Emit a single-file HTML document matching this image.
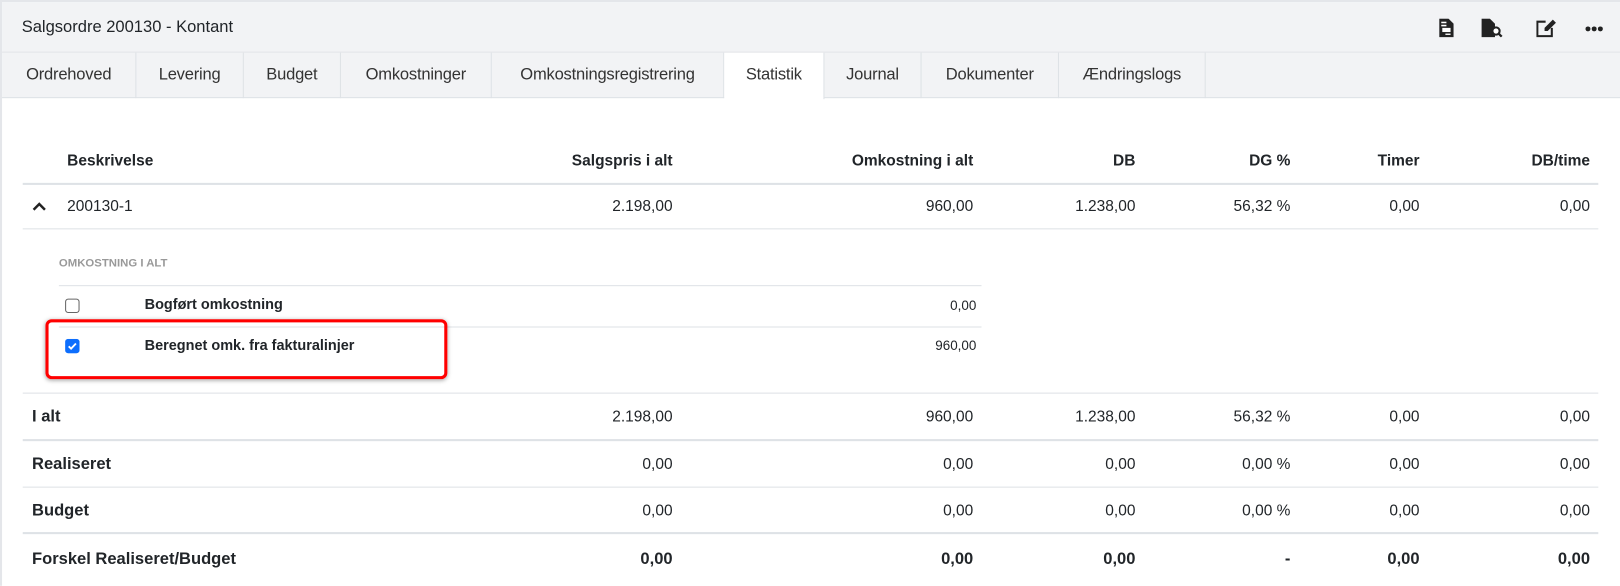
<!DOCTYPE html>
<html><head><meta charset="utf-8"><style>
*{box-sizing:border-box;margin:0;padding:0}
html,body{width:1620px;height:586px;overflow:hidden;background:#fff}
#w{width:1568px;height:567px;transform:scale(1.03316);transform-origin:0 0;font-family:"Liberation Sans",sans-serif;color:#212529;position:relative;border-left:2px solid #e4e6ea;border-top:2px solid #e4e6ea}
.hdr{position:absolute;left:0;top:0;right:0;height:49px;background:#f2f3f5;border-bottom:1px solid #e0e2e6}
.hdr .t{position:absolute;left:19px;top:16px;font-size:16px}
.tabs{position:absolute;left:0;top:49px;right:0;height:44px;background:#f2f3f5;border-bottom:1px solid #dee2e6}
.tab{position:absolute;top:0;height:44px;border-right:1px solid #dee2e6;font-size:16px;line-height:44px;text-align:center;color:#333;letter-spacing:-0.2px}
.tab.a{background:#fff;height:45px}
.abs{position:absolute;font-size:15px}
.r{text-align:right}
.b{font-weight:bold}
.ln{position:absolute;height:1px;background:#dee2e6}
.ic{position:absolute;top:16px}
</style></head><body><div id="w">
<div class="hdr"><div class="t">Salgsordre 200130 - Kontant</div>
<svg class="ic" style="left:1391px" width="14" height="18" viewBox="0 0 14 18"><path d="M0 0h9l5 5v13H0z" fill="#222"/><rect x="2" y="3" width="5" height="1.5" fill="#fff"/><rect x="2" y="6" width="5" height="1.5" fill="#fff"/><rect x="3" y="9" width="8" height="4" fill="#fff"/><rect x="6" y="14.5" width="5" height="1.3" fill="#fff"/></svg>
<svg class="ic" style="left:1432px" width="24" height="18" viewBox="0 0 24 18"><path d="M0 0h8l5 5v13H0z" fill="#222"/><circle cx="14" cy="12" r="3.5" fill="#fff" stroke="#222" stroke-width="2"/><path d="M16.5 14.5l3 3" stroke="#222" stroke-width="2.2"/></svg>
<svg class="ic" style="left:1485px" width="20" height="18" viewBox="0 0 20 18"><path d="M9 3H1v14h14V9" fill="none" stroke="#222" stroke-width="2"/><path d="M16 1l3 3-8 8H8V9z" fill="#222"/></svg>
<svg class="ic" style="left:1532px;top:23px" width="18" height="6" viewBox="0 0 18 6"><circle cx="3" cy="3" r="2.4" fill="#222"/><circle cx="9" cy="3" r="2.4" fill="#222"/><circle cx="15" cy="3" r="2.4" fill="#222"/></svg>
</div>
<div class="tabs">
<div class="tab" style="left:0;width:130px">Ordrehoved</div>
<div class="tab" style="left:130px;width:104px">Levering</div>
<div class="tab" style="left:234px;width:94px">Budget</div>
<div class="tab" style="left:328px;width:146px">Omkostninger</div>
<div class="tab" style="left:474px;width:225px">Omkostningsregistrering</div>
<div class="tab a" style="left:699px;width:97px">Statistik</div>
<div class="tab" style="left:796px;width:94px">Journal</div>
<div class="tab" style="left:890px;width:133px">Dokumenter</div>
<div class="tab" style="left:1023px;width:142px">Ændringslogs</div>
</div>

<div class="abs b" style="left:63px;top:145px">Beskrivelse</div>
<div class="abs b r" style="right:917px;top:145px">Salgspris i alt</div>
<div class="abs b r" style="right:626px;top:145px">Omkostning i alt</div>
<div class="abs b r" style="right:469px;top:145px">DB</div>
<div class="abs b r" style="right:319px;top:145px">DG %</div>
<div class="abs b r" style="right:194px;top:145px">Timer</div>
<div class="abs b r" style="right:29px;top:145px">DB/time</div>
<div class="ln" style="left:20px;width:1525px;top:175px;height:2px"></div>

<svg style="position:absolute;left:29px;top:193px" width="14" height="10" viewBox="0 0 14 10"><path d="M1.5 8L7 2.5 12.5 8" fill="none" stroke="#222" stroke-width="2.4"/></svg>
<div class="abs" style="left:63px;top:189px">200130-1</div>
<div class="abs r" style="right:917px;top:189px">2.198,00</div>
<div class="abs r" style="right:626px;top:189px">960,00</div>
<div class="abs r" style="right:469px;top:189px">1.238,00</div>
<div class="abs r" style="right:319px;top:189px">56,32 %</div>
<div class="abs r" style="right:194px;top:189px">0,00</div>
<div class="abs r" style="right:29px;top:189px">0,00</div>
<div class="ln" style="left:20px;width:1525px;top:219px"></div>

<div class="abs b" style="left:55px;top:247px;font-size:11px;color:#999">OMKOSTNING I ALT</div>
<div class="ln" style="left:55px;width:893px;top:274px"></div>
<div style="position:absolute;left:61px;top:287px;width:14px;height:14px;border:1px solid #666;border-radius:3px"></div>
<div class="abs b" style="left:138px;top:284px;font-size:14px">Bogført omkostning</div>
<div class="abs r" style="right:623px;top:286px;font-size:13px">0,00</div>
<div class="ln" style="left:55px;width:893px;top:314px"></div>
<svg style="position:absolute;left:61px;top:326px" width="14" height="14" viewBox="0 0 14 14"><rect width="14" height="14" rx="3" fill="#0d6efd"/><path d="M3.5 7.2l2.3 2.3 4.7-5" fill="none" stroke="#fff" stroke-width="1.8"/></svg>
<div class="abs b" style="left:138px;top:324px;font-size:14px">Beregnet omk. fra fakturalinjer</div>
<div class="abs r" style="right:623px;top:325px;font-size:13px">960,00</div>
<div style="position:absolute;left:42px;top:307px;width:389px;height:58px;border:3px solid #f00;border-radius:6px;box-shadow:0 1px 4px rgba(0,0,0,.35)"></div>
<div class="ln" style="left:20px;width:1525px;top:378px"></div>

<div class="abs b" style="left:29px;top:393px;font-size:16px">I alt</div>
<div class="abs r" style="right:917px;top:393px">2.198,00</div>
<div class="abs r" style="right:626px;top:393px">960,00</div>
<div class="abs r" style="right:469px;top:393px">1.238,00</div>
<div class="abs r" style="right:319px;top:393px">56,32 %</div>
<div class="abs r" style="right:194px;top:393px">0,00</div>
<div class="abs r" style="right:29px;top:393px">0,00</div>
<div class="ln" style="left:20px;width:1525px;top:423px;height:2px"></div>

<div class="abs b" style="left:29px;top:439px;font-size:16px">Realiseret</div>
<div class="abs r" style="right:917px;top:439px">0,00</div>
<div class="abs r" style="right:626px;top:439px">0,00</div>
<div class="abs r" style="right:469px;top:439px">0,00</div>
<div class="abs r" style="right:319px;top:439px">0,00 %</div>
<div class="abs r" style="right:194px;top:439px">0,00</div>
<div class="abs r" style="right:29px;top:439px">0,00</div>
<div class="ln" style="left:20px;width:1525px;top:469px"></div>

<div class="abs b" style="left:29px;top:484px;font-size:16px">Budget</div>
<div class="abs r" style="right:917px;top:484px">0,00</div>
<div class="abs r" style="right:626px;top:484px">0,00</div>
<div class="abs r" style="right:469px;top:484px">0,00</div>
<div class="abs r" style="right:319px;top:484px">0,00 %</div>
<div class="abs r" style="right:194px;top:484px">0,00</div>
<div class="abs r" style="right:29px;top:484px">0,00</div>
<div class="ln" style="left:20px;width:1525px;top:513px;height:2px"></div>

<div class="abs b" style="left:29px;top:531px;font-size:16px">Forskel Realiseret/Budget</div>
<div class="abs b r" style="right:917px;top:531px;font-size:16px">0,00</div>
<div class="abs b r" style="right:626px;top:531px;font-size:16px">0,00</div>
<div class="abs b r" style="right:469px;top:531px;font-size:16px">0,00</div>
<div class="abs b r" style="right:319px;top:531px;font-size:16px">-</div>
<div class="abs b r" style="right:194px;top:531px;font-size:16px">0,00</div>
<div class="abs b r" style="right:29px;top:531px;font-size:16px">0,00</div>
</div></body></html>
